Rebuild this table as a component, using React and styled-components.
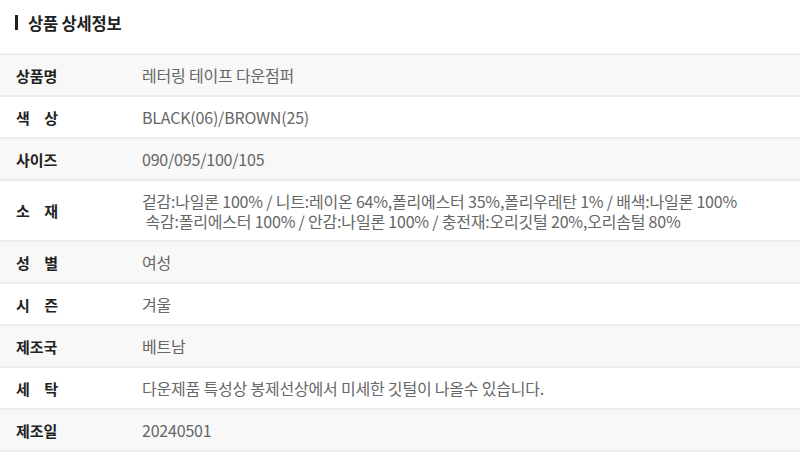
import React from "react";
import styled, { createGlobalStyle } from "styled-components";

const Global = createGlobalStyle`
  html, body { margin: 0; padding: 0; background: #fff; }
  body { font-family: "Noto Sans CJK KR", "Noto Sans", sans-serif; }
`;

const Page = styled.div`
  width: 800px;
  background: #fff;
`;

const Header = styled.h2`
  margin: 0;
  height: 53px;
  display: flex;
  align-items: center;
  gap: 10px;
  padding: 0 0 8px 15px;
  box-sizing: border-box;
  font-size: 16.5px;
  font-weight: 700;
  color: #222;
  letter-spacing: -0.2px;
`;

const Bar = styled.span`
  display: block;
  width: 3px;
  height: 15px;
  background: #222;
`;

const Table = styled.div`
  border-top: 2px solid #ececec;
`;

const Row = styled.div`
  display: grid;
  grid-template-columns: 142px 1fr;
  align-items: center;
  min-height: ${(p) => (p.$tall ? 59 : 40)}px;
  background: ${(p) => (p.$shade ? "#f8f8f8" : "#fff")};
  border-bottom: 2px solid #ececec;
`;

const Label = styled.div`
  padding-left: 16px;
  font-size: 15px;
  font-weight: 700;
  color: #222;
`;

const Spread = styled.span`
  display: flex;
  justify-content: space-between;
  width: 42px;
`;

const Value = styled.div`
  font-size: 16px;
  color: #666;
  line-height: 20px;
  letter-spacing: -0.2px;
`;

const rows = [
  ["상품명", "레터링 테이프 다운점퍼"],
  ["색상", "BLACK(06)/BROWN(25)"],
  ["사이즈", "090/095/100/105"],
  [
    "소재",
    [
      "겉감:나일론 100% / 니트:레이온 64%,폴리에스터 35%,폴리우레탄 1% / 배색:나일론 100%",
      "\u00a0속감:폴리에스터 100% / 안감:나일론 100% / 충전재:오리깃털 20%,오리솜털 80%",
    ],
  ],
  ["성별", "여성"],
  ["시즌", "겨울"],
  ["제조국", "베트남"],
  ["세탁", "다운제품 특성상 봉제선상에서 미세한 깃털이 나올수 있습니다."],
  ["제조일", "20240501"],
];

export default function App() {
  return (
    <Page>
      <Global />
      <Header>
        <Bar />
        상품 상세정보
      </Header>
      <Table>
        {rows.map(([label, value], i) => (
          <Row key={label} $shade={i % 2 === 0} $tall={Array.isArray(value)}>
            <Label>
              {label.length === 2 ? (
                <Spread>
                  <span>{label[0]}</span>
                  <span>{label[1]}</span>
                </Spread>
              ) : (
                label
              )}
            </Label>
            <Value>
              {Array.isArray(value) ? (
                <>
                  {value[0]}
                  <br />
                  {value[1]}
                </>
              ) : (
                value
              )}
            </Value>
          </Row>
        ))}
      </Table>
    </Page>
  );
}
